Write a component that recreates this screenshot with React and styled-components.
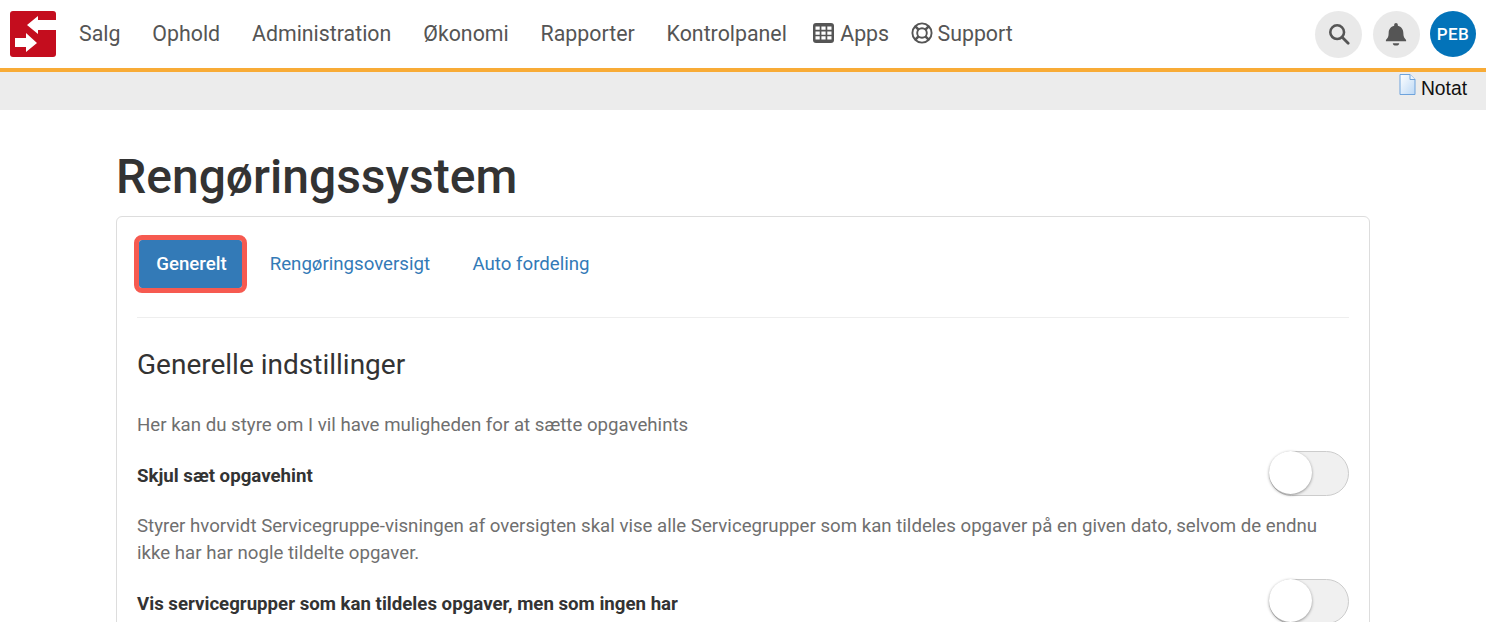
import React from "react";
import styled, { createGlobalStyle } from "styled-components";

const Global = createGlobalStyle`
  html, body { margin: 0; padding: 0; background: #fff; overflow: hidden; }
  body { font-family: Roboto, "Liberation Sans", sans-serif; color: #333; }
`;

const navItems = ["Salg", "Ophold", "Administration", "Økonomi", "Rapporter", "Kontrolpanel"];

function Logo() {
  return (
    <svg width="46" height="46" viewBox="0 0 46 46">
      <rect width="46" height="46" rx="3" fill="#c40d1e" />
      <path d="M17 14L28 5V9H46V19H28V23Z" fill="#fff" />
      <path d="M5 27H16V22L27 32L16 41V36H5Z" fill="#fff" />
    </svg>
  );
}

function GridIcon() {
  return (
    <svg width="21" height="20" viewBox="0 0 21 20">
      <rect width="21" height="20" y="0" rx="3" fill="#555" />
      <path
        d="M2.500 3.500h4.200v3.300H2.500zM8.400 3.500h4.200v3.300H8.400zM14.300 3.500h4.200v3.300h-4.200zM2.500 8.400h4.200v3.300H2.500zM8.400 8.400h4.200v3.300H8.400zM14.300 8.400h4.200v3.300h-4.200zM2.500 13.300h4.200v3.300H2.500zM8.400 13.300h4.200v3.300H8.400zM14.300 13.300h4.200v3.300h-4.200z"
        fill="#fff"
      />
    </svg>
  );
}

function LifeRing() {
  return (
    <svg width="22" height="22" viewBox="0 0 22 22" fill="none" stroke="#555" strokeWidth="1.900">
      <circle cx="11" cy="11" r="9.600" />
      <circle cx="11" cy="11" r="4.800" />
      <path d="M4.300 4.300L7.600 7.600M14.400 14.400L17.700 17.700M17.700 4.300L14.400 7.600M7.600 14.400L4.300 17.700" strokeWidth="2.600" />
    </svg>
  );
}

function SearchIcon() {
  return (
    <svg width="22" height="22" viewBox="0 0 24 24" fill="none" stroke="#555" strokeWidth="2.800">
      <circle cx="10" cy="10" r="7.500" />
      <path d="M15.500 15.500L22 22" strokeLinecap="round" strokeWidth="3" />
    </svg>
  );
}

function BellIcon() {
  return (
    <svg width="22" height="24" viewBox="0 0 24 26" fill="#555">
      <path d="M12 1a2 2 0 0 1 2 2v1c4 .9 6 4.200 6 8 0 4 1 5.500 3 7.500v1.500H1v-1.500C3 17.500 4 16 4 12c0-3.800 2-7.100 6-8V3a2 2 0 0 1 2-2z" />
      <path d="M8.500 23h7a3.500 2.500 0 0 1-7 0z" />
    </svg>
  );
}

function NoteIcon() {
  return (
    <svg width="17" height="21" viewBox="0 0 17 21">
      <defs>
        <linearGradient id="page" x1="0" y1="0" x2="1" y2="1">
          <stop offset="0" stopColor="#ffffff" />
          <stop offset="1" stopColor="#bcd8f5" />
        </linearGradient>
      </defs>
      <path d="M1 .5H11L16 5.500V20.500H1Z" fill="url(#page)" stroke="#6ea3dc" />
      <path d="M11 .5V5.500H16" fill="#eef5fc" stroke="#6ea3dc" />
    </svg>
  );
}

export default function App() {
  return (
    <Page>
      <Global />
      <TopBar>
        <LogoSlot><Logo /></LogoSlot>
        <Menu>
          {navItems.map((item) => (
            <MenuItem key={item}>{item}</MenuItem>
          ))}
          <IconItem $ml={-5.5} $gap={6}><GridIcon />Apps</IconItem>
          <IconItem $ml={-10.5} $gap={5}><LifeRing />Support</IconItem>
        </Menu>
        <Actions>
          <RoundButton><SearchIcon /></RoundButton>
          <RoundButton><BellIcon /></RoundButton>
          <Avatar>PEB</Avatar>
        </Actions>
      </TopBar>
      <SubBar>
        <NoteLink><NoteSlot><NoteIcon /></NoteSlot>Notat</NoteLink>
      </SubBar>
      <Content>
        <Title>Rengøringssystem</Title>
        <Card>
          <Tabs>
            <ActiveTab>Generelt</ActiveTab>
            <Tab>Rengøringsoversigt</Tab>
            <Tab>Auto fordeling</Tab>
          </Tabs>
          <Heading>Generelle indstillinger</Heading>
          <Help $top={29}>Her kan du styre om I vil have muligheden for at sætte opgavehints</Help>
          <SettingRow>
            <Label>Skjul sæt opgavehint</Label>
            <Toggle />
          </SettingRow>
          <Help $top={17.5}>
            Styrer hvorvidt Servicegruppe-visningen af oversigten skal vise alle Servicegrupper som kan tildeles opgaver på en given dato, selvom de endnu ikke har har nogle tildelte opgaver.
          </Help>
          <SettingRow>
            <Label>Vis servicegrupper som kan tildeles opgaver, men som ingen har</Label>
            <Toggle />
          </SettingRow>
        </Card>
      </Content>
    </Page>
  );
}

const Page = styled.div`
  width: 1486px;
  height: 622px;
  overflow: hidden;
`;

const TopBar = styled.header`
  height: 68px;
  display: flex;
  align-items: center;
  padding: 0 10px;
  background: #fff;
  border-bottom: 4px solid #f8ab36;
`;

const LogoSlot = styled.div`
  display: flex;
  width: 46px;
  height: 46px;
  margin-right: 23px;
`;

const Menu = styled.nav`
  display: flex;
  align-items: center;
  gap: 31.900px;
  flex: 1;
  padding-bottom: 2px;
  font-size: 21.330px;
  color: #555;
`;

const MenuItem = styled.a`
  white-space: nowrap;
`;

const IconItem = styled(MenuItem)`
  display: flex;
  align-items: center;
  gap: ${(p) => p.$gap}px;
  margin-left: ${(p) => p.$ml}px;
`;

const Actions = styled.div`
  display: flex;
  align-items: center;
  gap: 10.500px;
`;

const RoundButton = styled.button`
  width: 47px;
  height: 47px;
  border: 0;
  padding: 0;
  border-radius: 50%;
  background: #e9e9e9;
  display: flex;
  align-items: center;
  justify-content: center;
`;

const Avatar = styled.div`
  width: 46px;
  height: 46px;
  border-radius: 50%;
  background: #0373b9;
  color: #fff;
  font-size: 17px;
  font-weight: 500;
  letter-spacing: 0.500px;
  display: flex;
  align-items: center;
  justify-content: center;
`;

const SubBar = styled.div`
  height: 34px;
  padding: 0 19px 4px 0;
  background: #ececec;
  display: flex;
  justify-content: flex-end;
  align-items: center;
`;

const NoteLink = styled.div`
  display: flex;
  align-items: center;
  gap: 5px;
  font-family: "Liberation Sans", Arial, sans-serif;
  font-size: 19.300px;
  color: #111;
`;

const NoteSlot = styled.span`
  display: flex;
  margin-bottom: 9px;
`;

const Content = styled.main`
  padding: 0 116px;
`;

const Title = styled.h1`
  margin: 40px 0 12px;
  font-size: 48px;
  line-height: 54px;
  font-weight: 500;
  color: #333;
`;

const Card = styled.section`
  border: 1px solid #ddd;
  border-radius: 6px;
  padding: 20px;
`;

const Tabs = styled.div`
  display: flex;
  align-items: center;
  padding: 3px 0 29px;
  border-bottom: 1px solid #eee;
`;

const Tab = styled.a`
  padding: 13px 21.200px;
  font-size: 18.670px;
  font-weight: 400;
  line-height: 22px;
  color: #337ab7;
`;

const ActiveTab = styled(Tab)`
  color: #fff;
  font-weight: 500;
  background: #337ab7;
  border-radius: 3px;
  outline: 5px solid #f65a50;
  width: 103px;
  margin: 0 6.500px 0 2px;
  padding: 13px 0 13px 2px;
  box-sizing: border-box;
  text-align: center;
`;

const Heading = styled.h2`
  margin: 29px 0 0;
  font-size: 28px;
  line-height: 36px;
  font-weight: 400;
  color: #333;
`;

const Help = styled.p`
  margin: ${(p) => p.$top}px 0 0;
  font-size: 18.670px;
  line-height: 27px;
  color: #6f6f6f;
`;

const SettingRow = styled.div`
  display: flex;
  align-items: center;
  justify-content: space-between;
  margin-top: 11.500px;
`;

const Label = styled.div`
  padding-top: 5px;
  font-size: 18.670px;
  font-weight: 700;
  color: #333;
`;

const Toggle = styled.div`
  width: 80px;
  height: 45px;
  box-sizing: border-box;
  border-radius: 23px;
  background: #f0f0f0;
  border: 1px solid #ccc;
  position: relative;
  &::after {
    content: "";
    position: absolute;
    left: -1px;
    top: -1px;
    width: 43px;
    height: 43px;
    border-radius: 50%;
    background: #fff;
    box-shadow: 0 1px 3px rgba(0, 0, 0, 0.400);
  }
`;
